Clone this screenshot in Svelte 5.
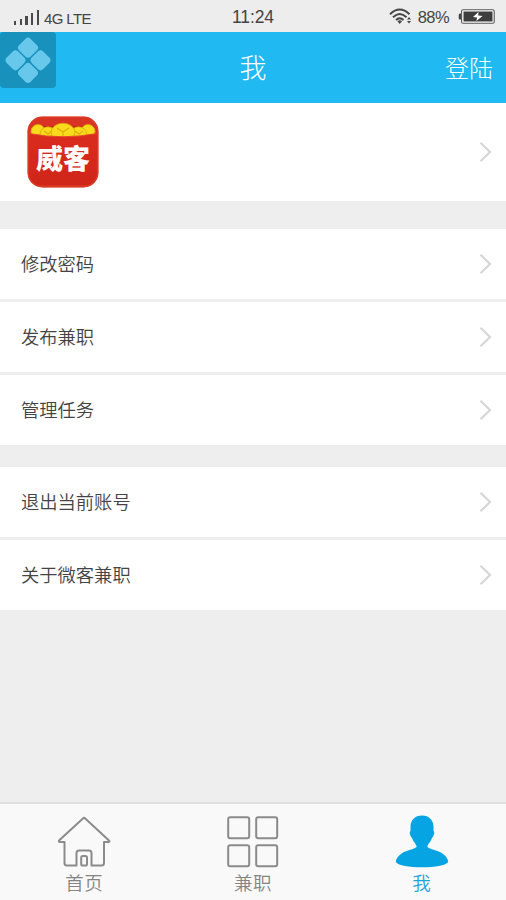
<script>
  const groups = [
    ['修改密码', '发布兼职', '管理任务'],
    ['退出当前账号', '关于微客兼职']
  ];
  const bars = [4, 6, 9, 12, 15];
</script>

{#snippet chevron()}
  <svg class="chevron" width="13" height="22" viewBox="0 0 13 22">
    <path d="M1.5 1.7 L11 11 L1.5 20.3" fill="none" stroke="#d6d6d6" stroke-width="2.2" />
  </svg>
{/snippet}

<div class="screen">
  <div class="status">
    <div class="carrier">
      <div class="bars">
        {#each bars as h}<i style="height:{h}px"></i>{/each}
      </div>
      <span class="network">4G LTE</span>
    </div>
    <span class="clock">11:24</span>
    <div class="power">
      <svg width="23" height="17" viewBox="0 0 23 17">
        <g fill="none" stroke="#444" stroke-width="1.9">
          <path d="M1 6.2 Q10.7 -3.2 20.5 6.2" />
          <path d="M4 9.2 Q10.7 2.6 17.5 9.2" />
          <path d="M7 12 Q10.7 8.3 14.5 12" />
        </g>
        <path d="M8.5 13.2 Q10.7 11.5 13 13.2 L10.7 16 Z" fill="#444" />
        <path d="M18 11.5 L20 9 L22 11.5 Z M18 13 L20 15.5 L22 13 Z" fill="#444" />
      </svg>
      <span class="percent">88%</span>
      <svg width="37" height="15" viewBox="0 0 37 15">
        <path d="M3 4.5 H2 Q.7 4.5 .7 6 V9 Q.7 10.5 2 10.5 H3 Z" fill="#444" />
        <rect x="3.6" y=".8" width="32.6" height="13.4" rx="1.5" fill="#fff" stroke="#555" stroke-width="1.1" />
        <rect x="5.5" y="2.5" width="29" height="10" fill="#3e3e3e" />
        <path d="M20.5 3 L15 8 L19 8.5 L18.5 12 L24.5 7 L20.2 6.6 Z" fill="#fff" />
      </svg>
    </div>
  </div>

  <header>
    <svg class="badge" width="56" height="56" viewBox="0 0 56 56">
      <rect width="56" height="56" rx="4" fill="#1892bd" />
      <g fill="#68c8ec">
        <rect x="19.9" y="7.6" width="16.2" height="16.2" rx="3.8" transform="rotate(45 28 15.7)" />
        <rect x="7.4" y="20.2" width="16.2" height="16.2" rx="3.8" transform="rotate(45 15.5 28.3)" />
        <rect x="32.4" y="20.2" width="16.2" height="16.2" rx="3.8" transform="rotate(45 40.5 28.3)" />
        <rect x="19.9" y="32.8" width="16.2" height="16.2" rx="3.8" transform="rotate(45 28 40.9)" />
      </g>
    </svg>
    <span class="title">我</span>
    <span class="login">登陆</span>
  </header>

  <div class="profile">
    <div class="logo">
      <svg width="72" height="72" viewBox="0 0 72 72">
        <defs>
          <clipPath id="tile"><rect x=".5" y=".5" width="71" height="71" rx="15" /></clipPath>
          <linearGradient id="pocket" x1="0" y1="0" x2="0" y2="1">
            <stop offset="0" stop-color="#db2c1e" />
            <stop offset="1" stop-color="#cf2519" />
          </linearGradient>
        </defs>
        <g clip-path="url(#tile)">
          <rect width="72" height="72" fill="#d93423" />
          <path d="M5 10 H67 V22 H5 Z" fill="#bd2017" />
          <g fill="#f8dc1b" stroke="#dfa60b" stroke-width=".8">
            <ellipse cx="11" cy="15.5" rx="7" ry="7" />
            <ellipse cx="61" cy="15.5" rx="7" ry="7" />
            <ellipse cx="21" cy="18" rx="8" ry="7.2" />
            <ellipse cx="51.5" cy="18" rx="8" ry="7.2" />
            <ellipse cx="36" cy="16.5" rx="12" ry="9.3" />
          </g>
          <path d="M30 12 L36 16 L42 12 M36 16 V20 M17 15 L21 18 L25 15 M48 15 L52 18 L56 15" fill="none" stroke="#dfac10" stroke-width="1.2" />
          <path d="M2 17.5 Q36 24 70 17.5 V60 Q69 69 59 69 H13 Q2 69 2 60 Z" fill="url(#pocket)" />
          <path d="M2 17.5 Q36 24 70 17.5" fill="none" stroke="#e5452b" stroke-width="1" />
          <rect x="1.3" y="1.3" width="69.4" height="69.4" rx="14" fill="none" stroke="#d93a26" stroke-width="1.6" />
        </g>
      </svg>
      <span>威客</span>
    </div>
    {@render chevron()}
  </div>

  {#each groups as rows}
    <div class="group">
      {#each rows as row}
        <div class="row"><span>{row}</span>{@render chevron()}</div>
      {/each}
    </div>
  {/each}

  <nav>
    <div class="tab">
      <svg width="56" height="54" viewBox="0 0 56 54">
        <g fill="none" stroke="#8b8b8b" stroke-width="2" stroke-linejoin="round">
          <path d="M28.4 2.8 Q28 2.5 27.5 2.9 L3 25.5 Q2.6 27 4 27 H8.5 V48 Q8.5 50.5 11 50.5 H20.5 V38 Q20.5 35.5 23 35.5 H33 Q35.5 35.5 35.5 38 V50.5 H45.5 Q48 50.5 48 48 V27 H52.5 Q54 26.7 53 25.4 Z" />
          <rect x="25.2" y="41" width="5.8" height="9.5" rx="1.6" />
        </g>
      </svg>
      <span>首页</span>
    </div>
    <div class="tab">
      <svg width="56" height="54" viewBox="0 0 56 54">
        <g fill="none" stroke="#8b8b8b" stroke-width="2">
          <rect x="3.2" y="2.3" width="21" height="21" rx="2" />
          <rect x="31.2" y="2.3" width="21" height="21" rx="2" />
          <rect x="3.2" y="30.3" width="21" height="21" rx="2" />
          <rect x="31.2" y="30.3" width="21" height="21" rx="2" />
        </g>
      </svg>
      <span>兼职</span>
    </div>
    <div class="tab active">
      <svg width="56" height="54" viewBox="0 0 56 54">
        <path d="M28 .4 C21 .4 16.5 5 16.5 12 V16 C15.2 17 15.6 20 18 23 C19.5 27.5 22.6 29 22.6 32 C20 34.5 13 34.8 8 38.2 C3.5 41.3 1.8 44.2 1.8 47 C4.5 50.8 15 52.2 28 52.2 S51.5 50.8 54.2 47 C54.2 44.2 52.5 41.3 48 38.2 C43 34.8 36 34.5 33.4 32 C33.4 29 36.5 27.5 38 23 C40.4 20 40.8 17 39.5 16 V12 C39.5 5 35 .4 28 .4 Z" fill="#06a4e2" />
      </svg>
      <span>我</span>
    </div>
  </nav>
</div>

<style>
  :global(body) { margin: 0; }
  .screen {
    width: 506px;
    height: 900px;
    background: #eee;
    display: flex;
    flex-direction: column;
    font-family: "Noto Sans CJK SC", sans-serif;
    font-weight: 350;
    color: #444;
    overflow: hidden;
  }
  .status {
    height: 32px;
    flex: none;
    box-sizing: border-box;
    padding: 0 11px 0 14px;
    background: #ededed;
    display: grid;
    grid-template-columns: 1fr auto 1fr;
    align-items: center;
    font-family: "Liberation Sans", Arial, sans-serif;
    font-weight: 400;
  }
  .carrier { display: flex; align-items: flex-end; gap: 5px; padding-top: 4px; }
  .bars { display: flex; align-items: flex-end; gap: 3.5px; height: 15px; margin-bottom: 2px; }
  .bars i { width: 2.2px; background: #4a4a4a; }
  .network { font-size: 15px; line-height: 16px; letter-spacing: -0.6px; }
  .clock { font-size: 17.5px; letter-spacing: -0.1px; padding: 2px 3px 0 0; }
  .power { display: flex; align-items: center; justify-content: flex-end; }
  .percent { font-size: 16.5px; letter-spacing: -0.6px; margin: 2px 9px 0 6px; }
  header {
    height: 71px;
    flex: none;
    background: #20b9f1;
    color: #fff;
    display: grid;
    grid-template-columns: 1fr auto 1fr;
    align-items: center;
    font-weight: 300;
  }
  .badge { align-self: start; display: block; }
  .title { font-size: 27px; line-height: 40px; padding-bottom: 2px; }
  .login { font-size: 24px; line-height: 36px; justify-self: end; padding: 0 13px 1px 0; }
  .profile {
    height: 98px;
    flex: none;
    background: #fff;
    display: flex;
    align-items: center;
    justify-content: space-between;
    padding: 0 14px 0 27px;
    margin-bottom: 28px;
  }
  .logo { position: relative; width: 72px; height: 72px; }
  .logo svg { display: block; }
  .logo span {
    position: absolute;
    left: 0;
    top: 23px;
    width: 72px;
    text-align: center;
    font-size: 27px;
    line-height: 38px;
    font-weight: 900;
    color: #fff;
  }
  .group { flex: none; display: flex; flex-direction: column; gap: 3px; margin-bottom: 22px; }
  .row {
    height: 70px;
    background: #fff;
    display: flex;
    align-items: center;
    justify-content: space-between;
    padding: 0 14px 0 21px;
    font-size: 18.3px;
  }
  .row span { padding-bottom: 2px; }
  .chevron { flex: none; }
  nav {
    margin-top: auto;
    height: 98px;
    flex: none;
    box-sizing: border-box;
    border-top: 2px solid #dedede;
    background: #f9f9f9;
    display: grid;
    grid-template-columns: repeat(3, 1fr);
  }
  .tab {
    display: flex;
    flex-direction: column;
    align-items: center;
    padding-top: 11px;
    font-size: 18.5px;
    line-height: 26px;
    letter-spacing: 0.5px;
    color: #858585;
  }
  .tab svg { display: block; }
  .active { color: #1ea5dc; }
</style>
